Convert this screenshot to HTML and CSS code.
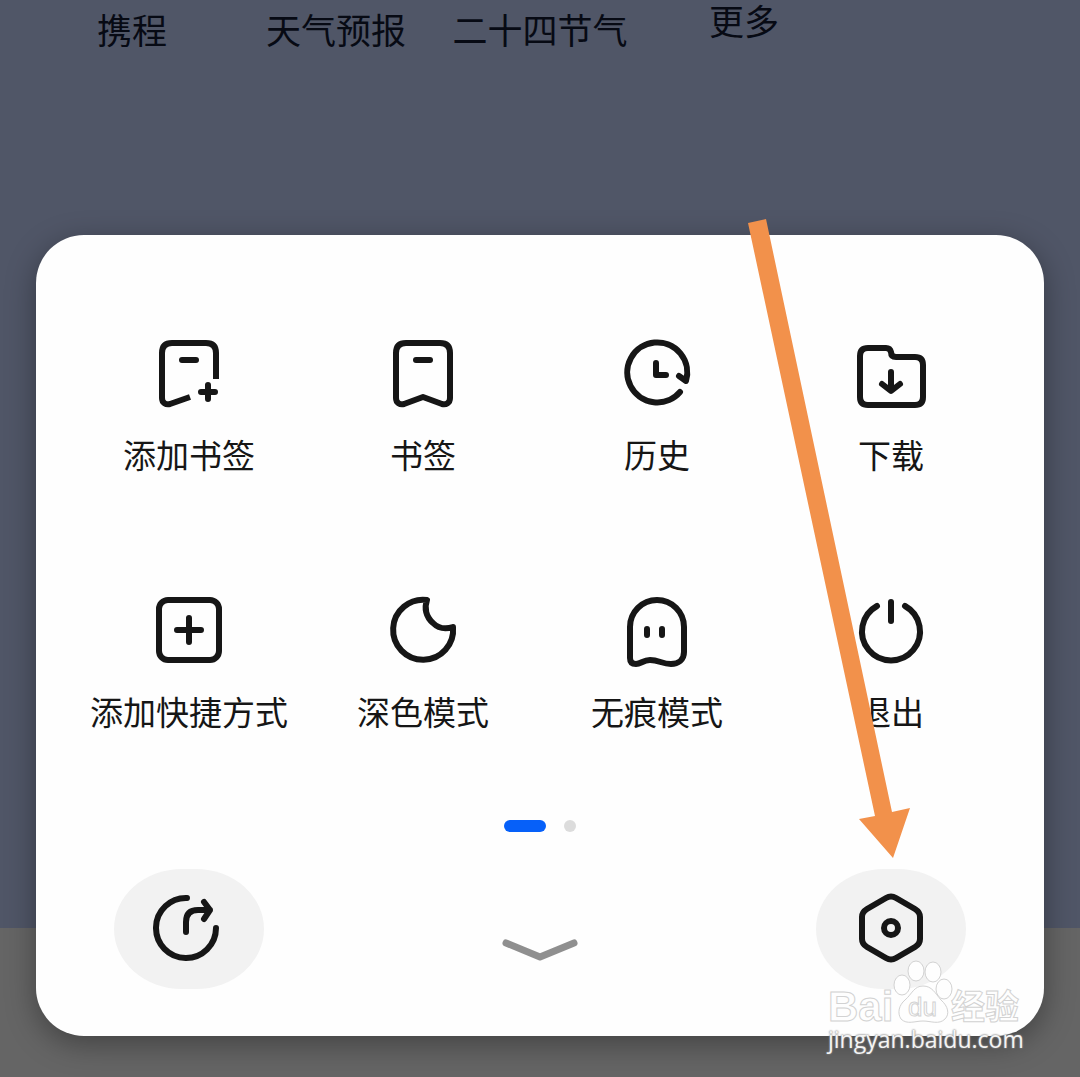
FILE: index.html
```html
<!DOCTYPE html>
<html lang="zh-CN">
<head>
  <meta charset="UTF-8" />
  <meta name="viewport" content="width=device-width, initial-scale=1.0"/>
  <title>浏览器菜单</title>
  <link rel="stylesheet" href="styles.css">
</head>
<body>

  <main class="home">
    <nav class="sites">
      <a href="#">携程</a>
      <a href="#">天气预报</a>
      <a href="#">二十四节气</a>
      <a href="#" class="more">更多</a>
    </nav>
  </main>
  <footer class="toolbar"></footer>

  <section class="sheet">
    <div class="menu">
      <button class="menu-item">
        <svg class="icon" viewBox="0 0 72 72">
          <path class="butt" d="M63 41V15Q63 5 53 5H19Q9 5 9 15V60C9 65 13 67 17 66L37 59"/>
          <path d="M29 22H43M48 54H62M55 47V61"/>
        </svg>
        <span>添加书签</span>
      </button>
      <button class="menu-item">
        <svg class="icon" viewBox="0 0 72 72">
          <path d="M19 5H53Q63 5 63 15V60C63 65 59 67 55 66L36 59L17 66C13 67 9 65 9 60V15Q9 5 19 5Z"/>
          <path d="M29 22H43"/>
        </svg>
        <span>书签</span>
      </button>
      <button class="menu-item">
        <svg class="icon" viewBox="0 0 72 72">
          <path d="M59 54A30 30 0 1 1 65 43L58 38"/>
          <path d="M35 25V37H45"/>
        </svg>
        <span>历史</span>
      </button>
      <button class="menu-item">
        <svg class="icon" viewBox="0 0 72 72">
          <path d="M13 10H31Q35 10 36 14Q36 19 41 19H60Q68 19 68 27V59Q68 67 60 67H13Q5 67 5 59V18Q5 10 13 10Z"/>
          <path d="M36 34V52M27 46L36 53L45 46"/>
        </svg>
        <span>下载</span>
      </button>
      <button class="menu-item">
        <svg class="icon" viewBox="0 0 72 72">
          <rect x="6" y="5" width="60" height="60" rx="9"/>
          <path d="M24 35H48M36 23V47"/>
        </svg>
        <span>添加快捷方式</span>
      </button>
      <button class="menu-item">
        <svg class="icon" viewBox="0 0 72 72">
          <path d="M40 5A30 30 0 1 0 66 32C60 34 52 34 46 28C39 22 37 13 40 5Z"/>
        </svg>
        <span>深色模式</span>
      </button>
      <button class="menu-item">
        <svg class="icon" viewBox="0 0 72 72">
          <path d="M9 32A27 27 0 0 1 63 32V57C63 65 57 69 50 69C41 69 38 65 29 65C22 65 20 69 15 69C11 69 9 67 9 63Z"/>
          <path d="M26 34V40M41 34V40"/>
        </svg>
        <span>无痕模式</span>
      </button>
      <button class="menu-item">
        <svg class="icon" viewBox="0 0 72 72">
          <path d="M22 11A29 29 0 1 0 50 11"/>
          <path d="M36 7V26"/>
        </svg>
        <span>退出</span>
      </button>
    </div>

    <div class="dots">
      <span class="dot active"></span>
      <span class="dot"></span>
    </div>

    <div class="actions">
      <button class="round-btn" aria-label="分享">
        <svg class="icon" viewBox="0 0 72 72">
          <path d="M34 5A30 30 0 1 0 63 35"/>
          <path d="M33 39V29Q33 17 45 17H57M51 9L57 17L51 26"/>
        </svg>
      </button>
      <button class="close-btn" aria-label="收起">
        <svg class="chevron" viewBox="0 0 80 24"><path d="M6 6L40 20L74 6"/></svg>
      </button>
      <button class="round-btn" aria-label="设置">
        <svg class="icon" viewBox="0 0 72 72">
          <path d="M31 5Q36 2 41 5L60 16Q65 19 65 24V46Q65 51 60 54L41 65Q36 68 31 65L12 54Q7 51 7 46V24Q7 19 12 16Z"/>
          <circle cx="36" cy="35" r="7"/>
        </svg>
      </button>
    </div>
  </section>

  <!-- pointer to the settings button -->
  <svg class="arrow" viewBox="0 0 162 640">
    <path d="M0 4L18 0L144 593L162 589L145 639L111 600L127 597Z"/>
  </svg>

  <div class="watermark">
    <svg viewBox="0 0 196 66">
      <text class="brand" x="0" y="60">Bai</text>
      <g class="paw">
        <ellipse cx="74" cy="24" rx="8" ry="10"/>
        <ellipse cx="88" cy="10" rx="8" ry="10"/>
        <ellipse cx="105" cy="11" rx="8" ry="10"/>
        <ellipse cx="116" cy="28" rx="8" ry="10"/>
        <path d="M95 25C104 25 107 32 113 39C120 45 122 53 117 58C111 64 103 60 95 60C87 60 79 64 73 58C69 52 71 44 77 39C84 33 86 25 95 25Z"/>
      </g>
      <text class="du" x="80" y="55">du</text>
      <text class="brand-cn" x="123" y="58">经验</text>
    </svg>
    <span class="url">jingyan.baidu.com</span>
  </div>

</body>
</html>
```

FILE: styles.css
```css
* {
  box-sizing: border-box;
}

body {
  position: relative;
  display: flex;
  flex-direction: column;
  min-height: 100vh;
  margin: 0;
  font-family: "Noto Sans CJK SC", sans-serif;
  background: #505667;
}

button {
  border: none;
  background: none;
  padding: 0;
  font-family: inherit;
  color: inherit;
  cursor: pointer;
}

.home {
  flex: 1;
}

.sites {
  display: grid;
  grid-template-columns: repeat(5, 1fr);
  padding: 0 30px;
}

.sites a {
  color: #070a14;
  font-size: 35px;
  line-height: 58px;
  text-align: center;
  text-decoration: none;
  white-space: nowrap;
}

.sites .more {
  line-height: 40px;
}

.toolbar {
  height: 149px;
  background: #656565;
}

/* bottom sheet */
.sheet {
  position: absolute;
  left: 36px;
  right: 36px;
  bottom: 41px;
  padding: 103px 36px 47px;
  border-radius: 48px;
  background: #fefefe;
  color: #161616;
  box-shadow: 0 8px 30px rgba(0, 0, 0, 0.35);
}

.menu {
  display: grid;
  grid-template-columns: repeat(4, 1fr);
  row-gap: 117px;
}

.menu-item {
  display: flex;
  flex-direction: column;
  align-items: center;
  gap: 20px;
  font-size: 33px;
  line-height: 48px;
  white-space: nowrap;
}

.icon {
  width: 72px;
  height: 72px;
  fill: none;
  stroke: #161616;
  stroke-width: 6;
  stroke-linecap: round;
  stroke-linejoin: round;
}

.icon .butt {
  stroke-linecap: butt;
}

.dots {
  display: flex;
  justify-content: center;
  gap: 18px;
  margin: 85px 0 37px;
}

.dot {
  width: 12px;
  height: 12px;
  border-radius: 6px;
  background: #dcdcdc;
}

.dot.active {
  width: 42px;
  background: #0660f9;
}

.actions {
  display: grid;
  grid-template-columns: 1fr 2fr 1fr;
  justify-items: center;
  align-items: end;
}

.round-btn {
  display: flex;
  align-items: center;
  justify-content: center;
  width: 150px;
  height: 120px;
  border-radius: 68px / 60px;
  background: #f2f2f2;
}

.close-btn {
  padding: 28px;
}

.chevron {
  display: block;
  width: 80px;
  height: 24px;
  fill: none;
  stroke: #8f8f8f;
  stroke-width: 7;
  stroke-linecap: round;
  stroke-linejoin: round;
}

.arrow {
  position: absolute;
  right: 170px;
  bottom: 218px;
  width: 162px;
  height: 640px;
  fill: #f2914b;
  pointer-events: none;
}

.watermark {
  position: absolute;
  right: 56px;
  bottom: 26px;
  width: 196px;
  pointer-events: none;
}

.watermark svg {
  display: block;
  width: 100%;
  overflow: visible;
}

.watermark text,
.paw {
  fill: #fefefe;
  stroke: #d2d2d2;
  stroke-width: 1;
}

.brand {
  font: bold 42px "Liberation Sans", sans-serif;
}

.brand-cn {
  font: bold 34px "Noto Sans CJK SC", sans-serif;
}

.du {
  font: 26px "Liberation Sans", sans-serif;
}

.url {
  display: block;
  color: #f4f4f4;
  font-family: "Open Sans", sans-serif;
  font-size: 23px;
  line-height: 24px;
  text-shadow: 0 0 2px #888888, 0 0 2px #888888;
}
```
